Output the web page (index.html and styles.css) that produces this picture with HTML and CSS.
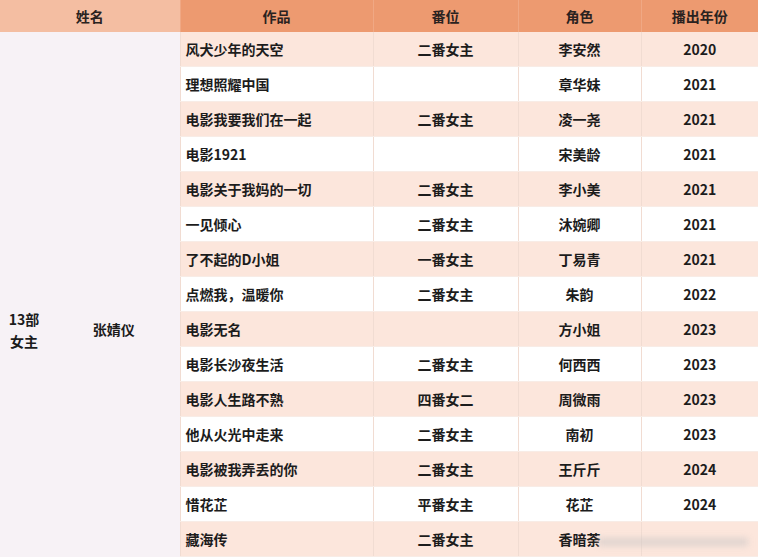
FILE: index.html
```html
<!DOCTYPE html>
<html lang="zh">
<head>
<meta charset="utf-8">
<link rel="stylesheet" href="styles.css">
</head>
<body>
<div class="wrap">
<table class="works">
  <colgroup>
    <col class="c-count"><col class="c-name"><col class="c-title"><col class="c-rank"><col class="c-role"><col class="c-year">
  </colgroup>
  <thead>
    <tr>
      <th colspan="2" class="h-name">姓名</th>
      <th>作品</th>
      <th>番位</th>
      <th>角色</th>
      <th>播出年份</th>
    </tr>
  </thead>
  <tbody>
    <tr class="odd">
      <td rowspan="15" class="count">13部<br>女主</td>
      <td rowspan="15" class="name">张婧仪</td>
      <td class="title">风犬少年的天空</td><td>二番女主</td><td>李安然</td><td>2020</td>
    </tr>
    <tr><td class="title">理想照耀中国</td><td></td><td>章华妹</td><td>2021</td></tr>
    <tr class="odd"><td class="title">电影我要我们在一起</td><td>二番女主</td><td>凌一尧</td><td>2021</td></tr>
    <tr><td class="title">电影1921</td><td></td><td>宋美龄</td><td>2021</td></tr>
    <tr class="odd"><td class="title">电影关于我妈的一切</td><td>二番女主</td><td>李小美</td><td>2021</td></tr>
    <tr><td class="title">一见倾心</td><td>二番女主</td><td>沐婉卿</td><td>2021</td></tr>
    <tr class="odd"><td class="title">了不起的D小姐</td><td>一番女主</td><td>丁易青</td><td>2021</td></tr>
    <tr><td class="title">点燃我，温暖你</td><td>二番女主</td><td>朱韵</td><td>2022</td></tr>
    <tr class="odd"><td class="title">电影无名</td><td></td><td>方小姐</td><td>2023</td></tr>
    <tr><td class="title">电影长沙夜生活</td><td>二番女主</td><td>何西西</td><td>2023</td></tr>
    <tr class="odd"><td class="title">电影人生路不熟</td><td>四番女二</td><td>周微雨</td><td>2023</td></tr>
    <tr><td class="title">他从火光中走来</td><td>二番女主</td><td>南初</td><td>2023</td></tr>
    <tr class="odd"><td class="title">电影被我弄丢的你</td><td>二番女主</td><td>王斤斤</td><td>2024</td></tr>
    <tr><td class="title">惜花芷</td><td>平番女主</td><td>花芷</td><td>2024</td></tr>
    <tr class="odd"><td class="title">藏海传</td><td>二番女主</td><td>香暗荼</td><td></td></tr>
  </tbody>
</table>
<div class="watermark"></div>
</div>
</body>
</html>
```
FILE: styles.css
```css
html, body {
  margin: 0;
  padding: 0;
  background: #ffffff;
}
body {
  font-family: "Noto Sans CJK SC", "Noto Sans", sans-serif;
  color: #1c1c1c;
}
.wrap {
  position: relative;
  width: 758px;
  height: 560px;
  overflow: hidden;
}
.works {
  width: 758px;
  border-collapse: collapse;
  table-layout: fixed;
}
.c-count { width: 48px; }
.c-name { width: 132px; }
.c-title { width: 193px; }
.c-rank { width: 145px; }
.c-role { width: 123px; }
.c-year { width: 117px; }

.works th {
  height: 32px;
  padding: 0;
  background: #ed9a70;
  font-size: 14px;
  font-weight: 700;
  color: #2a2220;
  text-align: center;
  border-left: 1px solid #f0a884;
}
.works th.h-name {
  background: #f4bea2;
  border-left: none;
}
.works td {
  height: 34px;
  padding: 0;
  font-size: 14px;
  font-weight: 700;
  text-align: center;
  line-height: 18px;
  border-left: 1px solid #f1dcd2;
  border-bottom: 1px solid #f8ece6;
  background: #ffffff;
}
.works tr.odd td {
  background: #fce6dc;
}
.works td.title {
  text-align: left;
  padding-left: 5px;
}
.works td.count,
.works td.name,
.works tr.odd td.count,
.works tr.odd td.name {
  background: #f7f2f6;
  border: none;
  vertical-align: top;
}
.works td.count {
  line-height: 22px;
  padding-top: 276px;
  text-align: center;
}
.works td.name {
  font-weight: 600;
  padding-top: 288px;
  padding-right: 0;
}
.watermark {
  position: absolute;
  left: 598px;
  top: 538px;
  width: 150px;
  height: 8px;
  background: rgba(200, 196, 196, 0.55);
  filter: blur(3px);
}
```
